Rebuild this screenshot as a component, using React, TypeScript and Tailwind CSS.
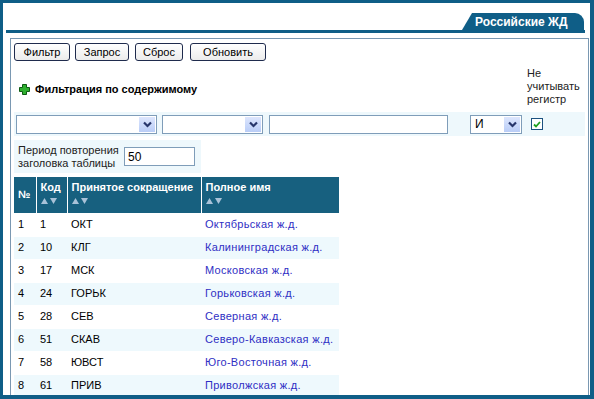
import React from 'react';

const font = "font-['Liberation_Sans',Arial,sans-serif]";

const rows = [
  { n: 1, code: '1', short: 'ОКТ', name: 'Октябрьская ж.д.' },
  { n: 2, code: '10', short: 'КЛГ', name: 'Калининградская ж.д.' },
  { n: 3, code: '17', short: 'МСК', name: 'Московская ж.д.' },
  { n: 4, code: '24', short: 'ГОРЬК', name: 'Горьковская ж.д.' },
  { n: 5, code: '28', short: 'СЕВ', name: 'Северная ж.д.' },
  { n: 6, code: '51', short: 'СКАВ', name: 'Северо-Кавказская ж.д.' },
  { n: 7, code: '58', short: 'ЮВСТ', name: 'Юго-Восточная ж.д.' },
  { n: 8, code: '61', short: 'ПРИВ', name: 'Приволжская ж.д.' },
];

const Button: React.FC<{ label: string; className: string }> = ({ label, className }) => (
  <button
    type="button"
    className={`${className} block h-[18px] border border-[#1f2b4d] rounded-[3px] bg-gradient-to-b from-white to-[#ececec] text-[11px] leading-none text-black`}
  >
    {label}
  </button>
);

const Select: React.FC<{ className: string; value?: string }> = ({ className, value }) => (
  <div className={`${className} h-[19px] border border-[#7f9db9] bg-white flex items-center`}>
    <span className="flex-1 pl-[4px] text-[12px] leading-none text-black">{value}</span>
    <span className="w-[16px] h-[15px] mr-[1px] bg-gradient-to-b from-[#dde6fd] to-[#b9cdf7] flex items-center justify-center">
      <svg width="9" height="7" viewBox="0 0 9 7">
        <polyline points="1,1.5 4.5,5 8,1.5" fill="none" stroke="#27366b" strokeWidth="2.2" />
      </svg>
    </span>
  </div>
);

const SortArrows = () => (
  <div className="flex gap-[2px] mt-[4px]">
    <svg width="7" height="6" viewBox="0 0 7 6">
      <polygon points="3.5,0 7,6 0,6" fill="#a9c2d8" />
    </svg>
    <svg width="7" height="6" viewBox="0 0 7 6">
      <polygon points="0,0 7,0 3.5,6" fill="#a9c2d8" />
    </svg>
  </div>
);

export default function App() {
  return (
    <div
      className={`${font} w-[594px] h-[399px] overflow-hidden bg-white flex flex-col border-solid border-[#0f5e87] border-l-[3px] border-t-[3px] border-r-[4px] border-b-[4px]`}
    >
      {/* top strip with tab */}
      <div className="ml-[3px] mr-[5px] pt-[10px] flex justify-end border-b-[3px] border-[#0f5e87]">
        <div className="mr-[1px] h-[17px] w-[122px] bg-[#0f5e87] rounded-tr-[9px] [clip-path:polygon(10px_0,100%_0,100%_100%,0_100%)] pl-[13px] flex items-center text-white font-bold text-[12px] leading-none">
          Российские ЖД
        </div>
      </div>

      {/* panel */}
      <div className="mt-[5px] ml-[7px] mr-[1px] flex-1 border border-[#7a98b2] flex flex-col pl-[3px] pt-[4px]">
        <div className="flex items-start h-[18px]">
          <Button label="Фильтр" className="w-[56px]" />
          <Button label="Запрос" className="ml-[5px] w-[54px]" />
          <Button label="Сброс" className="ml-[6px] w-[48px]" />
          <Button label="Обновить" className="ml-[7px] w-[76px]" />
        </div>

        <div className="flex items-end mt-[6px]">
          <div className="flex items-center pb-[10px] pl-[5px]">
            <svg width="11" height="11" viewBox="0 0 11 11">
              <polygon
                points="3.5,0.5 7.5,0.5 7.5,3.5 10.5,3.5 10.5,7.5 7.5,7.5 7.5,10.5 3.5,10.5 3.5,7.5 0.5,7.5 0.5,3.5 3.5,3.5"
                fill="#2fb02f"
                stroke="#0d5a12"
                strokeWidth="1"
              />
            </svg>
            <span className="ml-[5px] text-[11px] leading-[13px] font-bold text-black">
              Фильтрация по содержимому
            </span>
          </div>
          <div className="ml-auto mr-[3px] w-[58px] text-[11px] leading-[13px] text-[#222]">
            Не
            <br />
            учитывать
            <br />
            регистр
          </div>
        </div>

        <div className="mt-[6px] mr-[3px] h-[24px] bg-[#eef8fc] flex items-center pl-[2px]">
          <Select className="w-[141px]" />
          <Select className="ml-[5px] w-[101px]" />
          <div className="ml-[6px] w-[179px] h-[19px] border border-[#7f9db9] bg-white" />
          <Select className="ml-[22px] w-[52px]" value="И" />
          <div className="ml-[9px] w-[12px] h-[12px] border border-[#1c5180] bg-white flex items-center justify-center">
            <svg width="8" height="7" viewBox="0 0 8 7">
              <polyline points="1,3.5 3,5.5 7,1" fill="none" stroke="#21a121" strokeWidth="1.8" />
            </svg>
          </div>
        </div>

        <div className="mt-[4px] w-[187px] h-[33px] bg-[#eef8fc] flex items-center pl-[4px]">
          <div className="text-[11px] leading-[13px] text-[#222] w-[106px]">
            Период повторения
            <br />
            заголовка таблицы
          </div>
          <div className="w-[71px] h-[19px] border border-[#7f9db9] bg-white flex items-center pl-[3px] text-[12px] text-black">
            50
          </div>
        </div>

        <table className="mt-[4px] w-[325px] border-collapse text-[11px] leading-[13px]">
          <thead>
            <tr className="bg-[#17607f] text-white font-bold h-[36px]">
              <th className="w-[22px] border-r border-white text-left pl-[4px] align-middle">№</th>
              <th className="w-[31px] border-r border-white text-left pl-[4px] pt-[4px] align-top">
                Код
                <SortArrows />
              </th>
              <th className="w-[134px] border-r border-white text-left pl-[4px] pt-[4px] align-top">
                Принятое сокращение
                <SortArrows />
              </th>
              <th className="text-left pl-[4px] pt-[4px] align-top">
                Полное имя
                <SortArrows />
              </th>
            </tr>
          </thead>
          <tbody>
            {rows.map((r) => (
              <tr
                key={r.n}
                className={`h-[23px] border-t border-white ${r.n % 2 === 0 ? 'bg-[#eef9fd]' : 'bg-white'}`}
              >
                <td className="pl-[4px] text-black">{r.n}</td>
                <td className="pl-[4px] text-black">{r.code}</td>
                <td className="pl-[4px] text-black">{r.short}</td>
                <td className="pl-[4px] text-[#2f2fc4] tracking-[0.3px]">{r.name}</td>
              </tr>
            ))}
          </tbody>
        </table>
      </div>
    </div>
  );
}
